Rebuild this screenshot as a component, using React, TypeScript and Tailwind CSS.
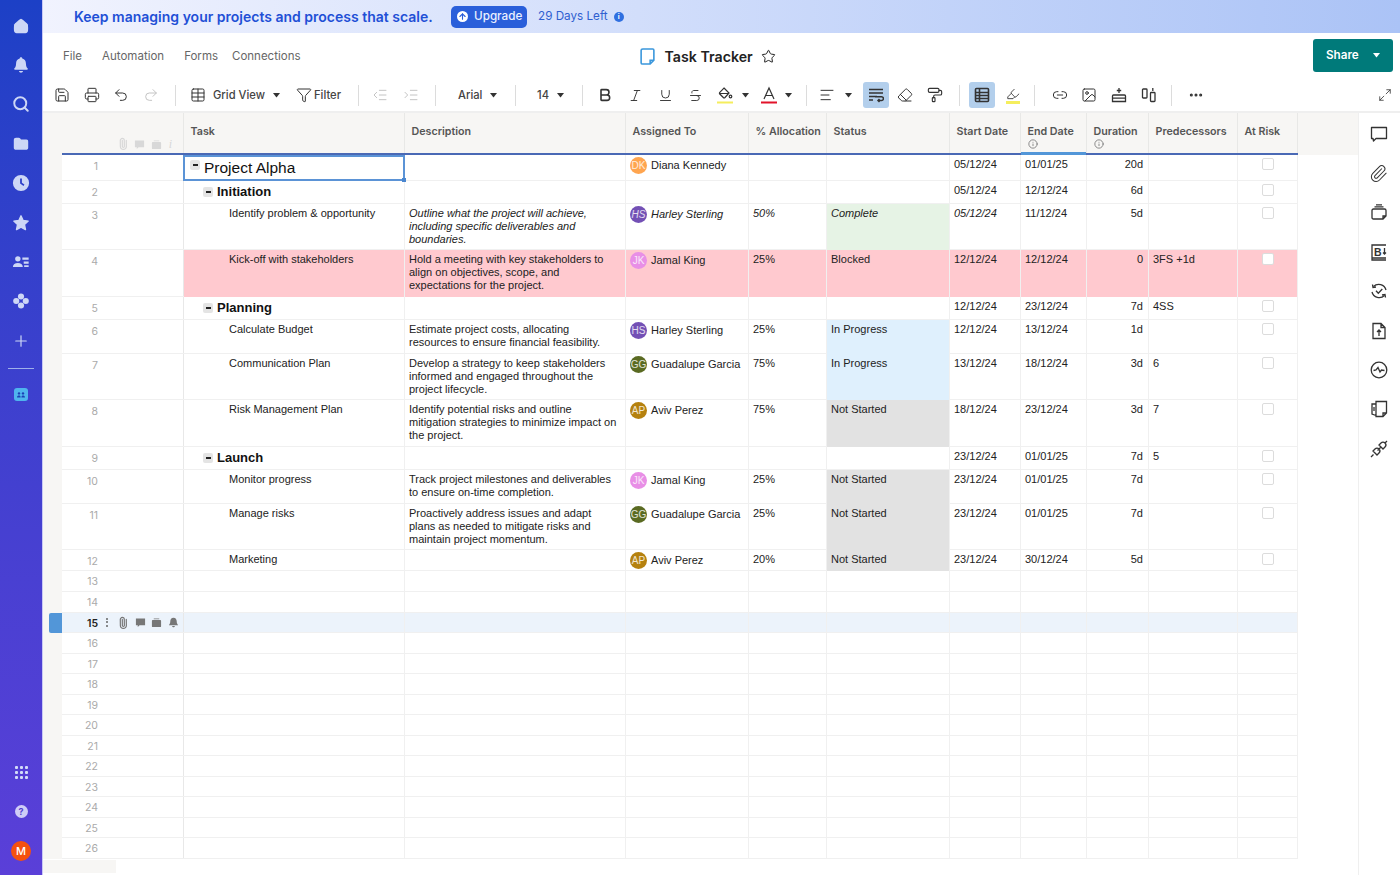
import React from 'react';
import {
  Save, Printer, Undo2, Redo2, Table, Funnel, IndentDecrease, IndentIncrease, Bold, Italic, Underline,
  Strikethrough, AlignLeft, Eraser, PaintRoller, Highlighter, Link2, Image, Ellipsis, Star, Search, Plus,
  Paperclip, Maximize2, ArrowUp, Info,
} from 'lucide-react';

const Caret = ({ className = 'text-[#333]' }: { className?: string }) => (
  <svg width="7" height="5" viewBox="0 0 7 5" className={className}>
    <path d="M0 0h7L3.5 4.5z" fill="currentColor" />
  </svg>
);

const Sep = ({ className = '' }: { className?: string }) => <div className={`h-[21px] w-px bg-[#dcdcdc] ${className}`} />;

const Btn = ({ children, active }: { children: React.ReactNode; active?: boolean }) => (
  <div className={`flex h-[26px] w-[26px] shrink-0 items-center justify-center rounded-[3px] ${active ? 'bg-[#b3cfec]' : ''}`}>{children}</div>
);

/* left rail icons */
const rail = 'h-[18px] w-[18px] text-[#cdd7f6]';
const railIcons = [
  <svg key="home" viewBox="0 0 20 20" className={rail} fill="currentColor"><path d="M10 2c1 0 7 5 7.6 6.4.3 1 .4 5 .2 7C17.600 17 16.500 18 15 18H5c-1.500 0-2.600-1-2.800-2.600-.2-2 -.1-6 .2-7C3 7 9 2 10 2z" /></svg>,
  <svg key="bell" viewBox="0 0 20 20" className={rail} fill="currentColor"><path d="M10 1.500c.8 0 1.400.6 1.400 1.300 2.700.6 4.100 2.900 4.100 5.700 0 3.500 1.500 4.700 2 5.500.3.600 0 1.300-.8 1.300H3.300c-.8 0-1.100-.7-.8-1.300.5-.8 2-2 2-5.500 0-2.800 1.400-5.100 4.100-5.700 0-.7.600-1.300 1.400-1.300zM7.700 16.800h4.600C12 18 11.100 18.700 10 18.700S8 18 7.700 16.800z" /></svg>,
  <Search key="search" className={rail} strokeWidth={2.6} />,
  <svg key="folder" viewBox="0 0 20 20" className={rail} fill="currentColor"><path d="M2 5.500C2 4 3 3 4.500 3h3c.8 0 1.200.3 1.700.9l.8 1.100h6c1.500 0 2 1 2 2.400v6.700c0 1.500-1 2.400-2.500 2.400h-11C3 16.500 2 15.600 2 14.100z" /></svg>,
  <svg key="clock" viewBox="0 0 20 20" className={rail} fill="currentColor"><path fillRule="evenodd" d="M10 1a9 9 0 1 1 0 18 9 9 0 0 1 0-18zM9 5v5.600l3.800 2.600 1-1.400L11 9.800V5z" /></svg>,
  <svg key="star" viewBox="0 0 20 20" className={rail} fill="currentColor" stroke="currentColor" strokeLinejoin="round" strokeWidth="1.500"><path d="M10 2l2.400 5.200 5.600.7-4.100 3.900 1.100 5.600-5-2.800-5 2.800 1.100-5.600L2 7.900l5.600-.7z" /></svg>,
  <svg key="team" viewBox="0 0 20 20" className={rail} fill="currentColor"><circle cx="6.500" cy="6.500" r="3" /><path d="M1 15.500c0-3 2.400-4.500 5.500-4.500s5.500 1.500 5.500 4.500zM11.500 5h7v2.500h-7zM13 9.500h5.500V12H13zM13.500 13.500h5v2h-5z" /></svg>,
  <svg key="apps" viewBox="0 0 20 20" className={rail} fill="currentColor"><circle cx="10" cy="5" r="3.400" /><circle cx="10" cy="15" r="3.400" /><circle cx="4.700" cy="10" r="3.400" /><circle cx="15.300" cy="10" r="3.400" /></svg>,
  <Plus key="plus" className={rail} strokeWidth={1.6} />,
];

/* right panel icons */
const side = 'h-[20px] w-[20px] text-[#333]';
const sideIcons = [
  <svg key="comment" viewBox="0 0 20 20" className={side} fill="none" stroke="currentColor" strokeWidth="1.300"><path d="M2.500 3.500h15v11H7l-2.500 2.500-.5-2.500H2.500z" strokeLinejoin="round" /></svg>,
  <Paperclip key="clip" className="h-[19px] w-[19px] text-[#333]" strokeWidth={1.300} />,
  <svg key="briefcase" viewBox="0 0 20 20" className={side} fill="none" stroke="currentColor" strokeWidth="1.300"><path d="M3 8.500c0-1 .5-1.500 1.500-1.500h11c1 0 1.500.5 1.500 1.500V14l-3 3H4.500C3.500 17 3 16.500 3 15.500zM14 17v-3h3M5.500 4.800h9M7 2.800h6" /></svg>,
  <svg key="brief" viewBox="0 0 20 20" className={side} fill="none" stroke="currentColor" strokeWidth="1.300"><path d="M17 3H3v15h14M3 16h14" /><text x="5" y="13.500" fontFamily="Liberation Sans, sans-serif" fontSize="10.500" fontWeight="700" fill="currentColor" stroke="none">B</text><path d="M15.500 6v6M14 10.500l1.500 1.500 1.500-1.500" /></svg>,
  <svg key="sync" viewBox="0 0 20 20" className={side} fill="none" stroke="currentColor" strokeWidth="1.300"><path d="M4.500 5.500A7.500 7.500 0 0 1 17 9M15.500 14.500A7.500 7.500 0 0 1 3 11M7 9.800l2.300 2.500 4-4.300" /><path d="M3.500 3.500l.5 3 3-.5M16.500 16.500l-.5-3-3 .5" /></svg>,
  <svg key="upload" viewBox="0 0 20 20" className={side} fill="none" stroke="currentColor" strokeWidth="1.300"><path d="M4 2.500h8l4 4v11H4zM12 2.500v4h4M10 15v-6M8 11l2-2 2 2" /></svg>,
  <svg key="activity" viewBox="0 0 20 20" className={side} fill="none" stroke="currentColor" strokeWidth="1.300"><circle cx="10" cy="10" r="7.800" /><path d="M4.500 10.500l2.500-.5 2-2.500 2 4.500 1.500-2 3 .5" /></svg>,
  <svg key="docs" viewBox="0 0 20 20" className={side} fill="none" stroke="currentColor" strokeWidth="1.300"><path d="M7 2.500h10.500v11.500l-3.500 3.500H7zM14 17.500V14h3.500M7 5H3v10l4 1.500M5 8v4" /></svg>,
  <svg key="plug" viewBox="0 0 20 20" className={side} fill="none" stroke="currentColor" strokeWidth="1.300"><path d="M2 18l2.500-2.500M18 2l-2.500 2.500M4 12l4 4 2-2a2.800 2.800 0 0 0-4-4zM10 6l4 4 2-2a2.800 2.800 0 0 0-4-4zM8.500 11.500l3-3" /></svg>,
];

type RowData = {
  h: string;
  n: number;
  level?: 0 | 1 | 2;
  task?: string;
  desc?: string[];
  who?: string;
  alloc?: string;
  status?: string;
  start?: string;
  end?: string;
  dur?: string;
  pred?: string;
  italic?: boolean;
  risk?: boolean;
  check?: boolean;
};

const rows: RowData[] = [
  { h: 'h-[26px]', n: 1, level: 0, task: 'Project Alpha', who: 'Diana Kennedy', start: '05/12/24', end: '01/01/25', dur: '20d', check: true },
  { h: 'h-[23px]', n: 2, level: 1, task: 'Initiation', start: '05/12/24', end: '12/12/24', dur: '6d', check: true },
  { h: 'h-[46px]', n: 3, level: 2, task: 'Identify problem & opportunity', desc: ['Outline what the project will achieve,', 'including specific deliverables and', 'boundaries.'], who: 'Harley Sterling', alloc: '50%', status: 'Complete', start: '05/12/24', end: '11/12/24', dur: '5d', italic: true, check: true },
  { h: 'h-[47px]', n: 4, level: 2, task: 'Kick-off with stakeholders', desc: ['Hold a meeting with key stakeholders to', 'align on objectives, scope, and', 'expectations for the project.'], who: 'Jamal King', alloc: '25%', status: 'Blocked', start: '12/12/24', end: '12/12/24', dur: '0', pred: '3FS +1d', risk: true, check: true },
  { h: 'h-[23px]', n: 5, level: 1, task: 'Planning', start: '12/12/24', end: '23/12/24', dur: '7d', pred: '4SS', check: true },
  { h: 'h-[34px]', n: 6, level: 2, task: 'Calculate Budget', desc: ['Estimate project costs, allocating', 'resources to ensure financial feasibility.'], who: 'Harley Sterling', alloc: '25%', status: 'In Progress', start: '12/12/24', end: '13/12/24', dur: '1d', check: true },
  { h: 'h-[46px]', n: 7, level: 2, task: 'Communication Plan', desc: ['Develop a strategy to keep stakeholders', 'informed and engaged throughout the', 'project lifecycle.'], who: 'Guadalupe Garcia', alloc: '75%', status: 'In Progress', start: '13/12/24', end: '18/12/24', dur: '3d', pred: '6', check: true },
  { h: 'h-[47px]', n: 8, level: 2, task: 'Risk Management Plan', desc: ['Identify potential risks and outline', 'mitigation strategies to minimize impact on', 'the project.'], who: 'Aviv Perez', alloc: '75%', status: 'Not Started', start: '18/12/24', end: '23/12/24', dur: '3d', pred: '7', check: true },
  { h: 'h-[23px]', n: 9, level: 1, task: 'Launch', start: '23/12/24', end: '01/01/25', dur: '7d', pred: '5', check: true },
  { h: 'h-[34px]', n: 10, level: 2, task: 'Monitor progress', desc: ['Track project milestones and deliverables', 'to ensure on-time completion.'], who: 'Jamal King', alloc: '25%', status: 'Not Started', start: '23/12/24', end: '01/01/25', dur: '7d', check: true },
  { h: 'h-[46px]', n: 11, level: 2, task: 'Manage risks', desc: ['Proactively address issues and adapt', 'plans as needed to mitigate risks and', 'maintain project momentum.'], who: 'Guadalupe Garcia', alloc: '25%', status: 'Not Started', start: '23/12/24', end: '01/01/25', dur: '7d', check: true },
  { h: 'h-[21px]', n: 12, level: 2, task: 'Marketing', who: 'Aviv Perez', alloc: '20%', status: 'Not Started', start: '23/12/24', end: '30/12/24', dur: '5d', check: true },
  ...[13, 14, 15, 16, 17, 18, 19, 20, 21, 22, 23, 24, 25, 26].map(n => ({ h: n === 13 ? 'h-[21px]' : 'h-[20.500px]', n })),
];

const people: Record<string, { initials: string; color: string }> = {
  'Diana Kennedy': { initials: 'DK', color: 'bg-[#ffa54f]' },
  'Harley Sterling': { initials: 'HS', color: 'bg-[#7350b5]' },
  'Jamal King': { initials: 'JK', color: 'bg-[#e88fe6]' },
  'Guadalupe Garcia': { initials: 'GG', color: 'bg-[#5a6a22]' },
  'Aviv Perez': { initials: 'AP', color: 'bg-[#b5810f]' },
};

const statusColor: Record<string, string> = {
  Complete: 'bg-[#e6f3e5] -mb-px',
  'In Progress': 'bg-[#dff0fd] -mb-px',
  'Not Started': 'bg-[#e2e2e2] -mb-px',
  Blocked: '',
};

const Minus = () => (
  <div className="flex h-[10px] w-[10px] shrink-0 items-center justify-center rounded-[2px] bg-[#e4e4e4]">
    <div className="h-[1.500px] w-[5px] bg-[#222]" />
  </div>
);

const RowIcons = ({ dark }: { dark?: boolean }) => {
  const c = dark ? 'text-[#777]' : 'text-[#d8d8d8]';
  return (
    <div className={`flex items-center ${c}`}>
      <Paperclip className="h-[12px] w-[12px] -rotate-45" strokeWidth={2.400} />
      <svg viewBox="0 0 12 12" className="ml-[5.500px] h-[11px] w-[11px]" fill="currentColor"><path d="M1 1.500h10v7.500H5l-2 2V9H1z" /></svg>
      <svg viewBox="0 0 12 12" className="ml-[5.500px] h-[11px] w-[11px]" fill="currentColor"><path d="M1 4.500c0-.8.5-1.200 1.200-1.200h7.600c.7 0 1.200.4 1.200 1.200V10c0 .6-.5 1-1.200 1H2.200C1.500 11 1 10.600 1 10zM3 1.500h6v1H3z" /></svg>
      {dark ? (
        <svg viewBox="0 0 12 12" className="ml-[5.500px] h-[11px] w-[11px]" fill="currentColor"><path d="M6 .7c2.300 0 3.500 1.800 3.500 4 0 2.600 1 3 1.500 4.300H1c.5-1.300 1.500-1.700 1.500-4.300 0-2.200 1.200-4 3.500-4zM4.500 9.800h3C7.300 11 6.700 11.300 6 11.300S4.700 11 4.500 9.800z" /></svg>
      ) : (
        <span className="ml-[7px] font-['Liberation_Serif',serif] text-[12px] italic leading-none">i</span>
      )}
    </div>
  );
};

const cols = ['w-[221px]', 'w-[221px]', 'w-[123px]', 'w-[78px]', 'w-[123px]', 'w-[71px]', 'w-[66px]', 'w-[62px]', 'w-[89px]', 'w-[60px]'];

const Cell = ({ w, className = '', children }: { w: string; className?: string; children?: React.ReactNode }) => (
  <div className={`${w} shrink-0 border-r border-[#f0f0f0] ${className}`}>{children}</div>
);

const GridRow = ({ r }: { r: RowData }) => {
  const selected = r.n === 15;
  const person = r.who ? people[r.who] : null;
  const tint = r.risk ? 'bg-[#ffc9cf] -mb-px' : '';
  const it = r.italic ? 'italic' : '';
  return (
    <div className={`flex ${r.h} font-['Liberation_Sans',sans-serif] text-[11px] leading-[13px] text-[#222]`}>
      <div className="w-[19px] shrink-0 bg-[#f7f6f4]">
        {selected && <div className="ml-[6px] h-full w-[13px] rounded-l-[2px] bg-[#5296d8]" />}
      </div>
      <div className={`flex w-[1236px] shrink-0 border-b border-[#f0f0f0] ${selected ? 'bg-[#ecf3fb]' : ''}`}>
        <div className={`flex w-[122px] shrink-0 items-start border-r border-[#e8e8e8] ${r.n > 12 ? 'pt-[4px]' : 'pt-[5px]'}`}>
          <div className={`ml-[19px] w-[17px] text-right font-['Inter',sans-serif] text-[10.500px] ${selected ? 'font-semibold text-[#222]' : 'text-[#aaaaaa]'}`}>{r.n}</div>
          {selected && (
            <>
              <div className="ml-[8px] mr-[9px] flex flex-col gap-[1.500px] pt-[1px]">
                <div className="h-[2px] w-[2px] rounded-full bg-[#666]" />
                <div className="h-[2px] w-[2px] rounded-full bg-[#666]" />
                <div className="h-[2px] w-[2px] rounded-full bg-[#666]" />
              </div>
              <RowIcons dark />
            </>
          )}
        </div>
        <Cell w={cols[0]} className={tint}>
          {r.level === 0 && (
            <div className="relative -mx-[1px] flex h-[26px] items-start gap-[4px] pl-[7px] pt-[4px] text-[15.500px] leading-[18px] text-[#111] outline outline-2 -outline-offset-2 outline-[#5b93d6]">
              <div className="mt-[1px]"><Minus /></div>
              {r.task}
              <div className="absolute -bottom-[1px] -right-[1px] h-[4px] w-[4px] bg-[#4a86cf]" />
            </div>
          )}
          {r.level === 1 && (
            <div className="flex items-start gap-[4px] pl-[19px] pt-[3px] text-[13px] font-bold leading-[15px] text-[#111]">
              <div className="mt-[3px]"><Minus /></div>
              {r.task}
            </div>
          )}
          {r.level === 2 && <div className="pl-[45px] pt-[3px]">{r.task}</div>}
        </Cell>
        <Cell w={cols[1]} className={`${tint} pl-[4px] pt-[3px] ${it}`}>
          {r.desc?.map(line => <div key={line} className="whitespace-nowrap">{line}</div>)}
        </Cell>
        <Cell w={cols[2]} className={`${tint} ${it}`}>
          {person && (
            <div className="flex items-center gap-[4px] pl-[4px] pt-[2px]">
              <div className={`flex h-[17px] w-[17px] items-center justify-center rounded-full text-[10px] leading-none text-white/80 ${person.color}`}>{person.initials}</div>
              <span className="whitespace-nowrap">{r.who}</span>
            </div>
          )}
        </Cell>
        <Cell w={cols[3]} className={`${tint} pl-[4px] pt-[3px] ${it}`}>{r.alloc}</Cell>
        <Cell w={cols[4]} className={`${r.status && !r.risk ? statusColor[r.status] : tint} pl-[4px] pt-[3px] ${it}`}>{r.status}</Cell>
        <Cell w={cols[5]} className={`${tint} pl-[4px] pt-[3px] ${it}`}>{r.start}</Cell>
        <Cell w={cols[6]} className={`${tint} pl-[4px] pt-[3px]`}>{r.end}</Cell>
        <Cell w={cols[7]} className={`${tint} pr-[5px] pt-[3px] text-right`}>{r.dur}</Cell>
        <Cell w={cols[8]} className={`${tint} pl-[4px] pt-[3px]`}>{r.pred}</Cell>
        <Cell w={cols[9]} className={`${tint} pl-[24px] pt-[3px]`}>
          {r.check && <div className={`h-[12px] w-[12px] rounded-[2px] border border-[#dcdcdc] ${r.risk ? 'bg-white' : ''}`} />}
        </Cell>
      </div>
    </div>
  );
};

const Head = ({ w, label, info, active }: { w: string; label: string; info?: boolean; active?: boolean }) => (
  <div className={`${w} relative shrink-0 border-r border-[#e8e8e6] pl-[6.500px] pt-[12px] text-[10.700px] font-semibold leading-[14px] text-[#555]`}>
    {label}
    {info && <Info className="h-[10px] w-[10px] text-[#777]" />}
    {active && <div className="absolute -bottom-[2px] left-0 right-0 h-[3px] bg-[#5296d8]" />}
  </div>
);

const Label = ({ className, children }: { className: string; children: React.ReactNode }) => (
  <span className={`whitespace-nowrap text-[11.200px] font-medium text-[#444] ${className}`}>{children}</span>
);

export default function App() {
  return (
    <div className="flex h-[875px] w-[1400px] overflow-hidden bg-white font-['Inter',sans-serif]">
      {/* Rail */}
      <aside className="flex w-[43px] shrink-0 flex-col items-center justify-between border-r border-[#c9c9f5] bg-gradient-to-b from-[#1c40c6] to-[#5a3fd8] pt-[6px] pb-[4px]">
        <div className="flex flex-col items-center">
          {railIcons.map(icon => <div key={icon.key} className="flex h-[39.400px] items-center justify-center">{icon}</div>)}
          <div className="mt-[7px] h-[1.500px] w-[26px] bg-[#9fb0ea]" />
          <div className="mt-[19px] flex h-[13px] w-[14px] items-center justify-center rounded-[3px] bg-[#4fb4ee]">
            <svg viewBox="0 0 12 10" className="h-[8px] w-[10px] text-[#1c40b6]" fill="currentColor"><circle cx="3.500" cy="3" r="1.500" /><circle cx="8.500" cy="3" r="1.500" /><path d="M1 8c0-1.500 1-2.300 2.500-2.300S5.500 6.500 5.500 8zM6.500 8c0-1.500 1-2.300 2-2.300S11 6.500 11 8z" /></svg>
          </div>
        </div>
        <div className="flex flex-col items-center">
          <div className="flex h-[39.400px] items-center justify-center">
            <div className="grid grid-cols-3 gap-[2px]">
              {[0, 1, 2, 3, 4, 5, 6, 7, 8].map(i => <div key={i} className="h-[3px] w-[3px] rounded-[1px] bg-[#d3dcf8]" />)}
            </div>
          </div>
          <div className="flex h-[39.400px] items-center justify-center">
            <div className="flex h-[13px] w-[13px] items-center justify-center rounded-full bg-[#cfcdf7] text-[9px] font-bold text-[#5540cf]">?</div>
          </div>
          <div className="flex h-[39.400px] items-center justify-center">
            <div className="flex h-[20px] w-[20px] items-center justify-center rounded-full bg-[#f4510f] text-[11px] font-medium text-white">M</div>
          </div>
        </div>
      </aside>

      <div className="flex min-w-0 flex-1 flex-col">
        {/* Banner */}
        <div className="flex h-[33px] shrink-0 items-center bg-gradient-to-r from-[#f1f3fe] to-[#abc3f6] pl-[31px]">
          <span className="w-[377px] whitespace-nowrap text-[14px] font-semibold text-[#1f50d6]">Keep managing your projects and process that scale.</span>
          <div className="flex h-[22px] w-[76px] items-center gap-[6px] rounded-[5px] bg-[#2a5fda] pl-[6px] text-[11.700px] font-medium leading-none text-[#eaf0ff]">
            <div className="flex h-[11px] w-[11px] items-center justify-center rounded-full bg-white">
              <ArrowUp className="h-[9px] w-[9px] text-[#2a5fda]" strokeWidth={3} />
            </div>
            Upgrade
          </div>
          <span className="ml-[11px] text-[11.700px] text-[#2f5fd0]">29 Days Left</span>
          <div className="ml-[6px] flex h-[10px] w-[10px] items-center justify-center rounded-full bg-[#2f6fe0] text-[7px] font-bold leading-none text-white">i</div>
        </div>

        {/* Menu */}
        <div className="flex h-[46px] shrink-0 items-center pt-[1px] text-[11.500px] text-[#666]">
          <span className="ml-[20px]">File</span>
          <span className="ml-[20px]">Automation</span>
          <span className="ml-[20px]">Forms</span>
          <span className="ml-[14px]">Connections</span>
          <div className="ml-[339px] flex items-center">
            <svg viewBox="0 0 14 16" className="h-[17px] w-[15px] text-[#3a97dc]" fill="none" stroke="currentColor" strokeWidth="1.500"><path d="M2.500 1h9.500c.6 0 1 .4 1 1v9.500L9.500 15h-7c-.6 0-1.500-.4-1.500-1V2c0-.6.900-1 1.500-1zM13 11.500H9.500V15" /></svg>
            <span className="ml-[10px] text-[14.200px] font-semibold text-[#222]">Task Tracker</span>
            <Star className="ml-[8px] h-[15px] w-[15px] text-[#222]" strokeWidth={1.600} />
          </div>
          <div className="ml-auto mr-[7px] -mt-[2px] flex h-[33px] w-[80px] items-center rounded-[3px] bg-[#007a7a] pl-[13px] text-[11.700px] font-semibold text-white">
            Share
            <Caret className="ml-[14px] text-white" />
          </div>
        </div>

        {/* Toolbar */}
        <div className="flex h-[34px] shrink-0 items-center border-b-2 border-[#efefef] pl-[6px] text-[#333]">
          <Btn><Save className="h-[16px] w-[16px]" strokeWidth={1.500} /></Btn>
          <div className="ml-[4px]"><Btn><Printer className="h-[16px] w-[16px]" strokeWidth={1.500} /></Btn></div>
          <div className="ml-[3px]"><Btn><Undo2 className="h-[16px] w-[16px]" strokeWidth={1.500} /></Btn></div>
          <div className="ml-[4px]"><Btn><Redo2 className="h-[16px] w-[16px] text-[#c4c4c4]" strokeWidth={1.500} /></Btn></div>
          <Sep className="ml-[11px]" />
          <div className="ml-[9px]"><Btn><Table className="h-[16px] w-[16px]" strokeWidth={1.500} /></Btn></div>
          <Label className="ml-[2px] w-[51px]">Grid View</Label>
          <Caret className="ml-[9px]" />
          <Funnel className="ml-[16px] h-[16px] w-[16px]" strokeWidth={1.500} />
          <Label className="w-[33px] pl-[2px]">Filter</Label>
          <Sep className="ml-[13px]" />
          <div className="ml-[8px]"><Btn><IndentDecrease className="h-[16px] w-[16px] text-[#c4c4c4]" strokeWidth={1.500} /></Btn></div>
          <div className="ml-[5px]"><Btn><IndentIncrease className="h-[16px] w-[16px] text-[#c4c4c4]" strokeWidth={1.500} /></Btn></div>
          <Sep className="ml-[11px]" />
          <Label className="ml-[22px] w-[24px]">Arial</Label>
          <Caret className="ml-[8px]" />
          <Sep className="ml-[18px]" />
          <Label className="ml-[21px] w-[14px]">14</Label>
          <Caret className="ml-[6px]" />
          <Sep className="ml-[18px]" />
          <div className="ml-[9px]"><Btn><Bold className="h-[16px] w-[16px]" strokeWidth={2.400} /></Btn></div>
          <div className="ml-[4px]"><Btn><Italic className="h-[15px] w-[15px]" strokeWidth={1.500} /></Btn></div>
          <div className="ml-[4px]"><Btn><Underline className="h-[15px] w-[15px]" strokeWidth={1.500} /></Btn></div>
          <div className="ml-[4px]"><Btn><Strikethrough className="h-[15px] w-[15px]" strokeWidth={1.500} /></Btn></div>
          <div className="ml-[4px]">
            <Btn>
              <svg viewBox="0 0 16 18" className="h-[18px] w-[16px]" fill="none" stroke="currentColor" strokeWidth="1.200">
                <path d="M7 2l5 5-4 4.500a1.200 1.200 0 0 1-1.700 0L2.800 8a1.200 1.200 0 0 1 0-1.700zM3 7.500h9" />
                <circle cx="13.500" cy="10.500" r="1.300" />
                <rect x="0" y="15.500" width="16" height="2" fill="#f5ee5d" stroke="none" />
              </svg>
            </Btn>
          </div>
          <Caret className="ml-[4px]" />
          <div className="ml-[7px]">
            <Btn>
              <svg viewBox="0 0 16 18" className="h-[18px] w-[16px]" fill="none" stroke="currentColor" strokeWidth="1.200">
                <path d="M3 13L8 2l5 11M5 9.500h6" />
                <rect x="0" y="15.500" width="16" height="2" fill="#e2132a" stroke="none" />
              </svg>
            </Btn>
          </div>
          <Caret className="ml-[3px]" />
          <Sep className="ml-[14px]" />
          <div className="ml-[7px]"><Btn><AlignLeft className="h-[16px] w-[16px]" strokeWidth={1.500} /></Btn></div>
          <Caret className="ml-[5px]" />
          <div className="ml-[11px]">
            <Btn active>
              <svg viewBox="0 0 16 16" className="h-[16px] w-[16px]" fill="none" stroke="currentColor" strokeWidth="1.500"><path d="M1 2.500h14M1 6h14M1 9.500h8M1 13h4M11 13.500h2.500a1.800 1.800 0 0 0 0-3.800H7M11.500 12l-1.500 1.500 1.500 1.500" /></svg>
            </Btn>
          </div>
          <div className="ml-[3px]"><Btn><Eraser className="h-[16px] w-[16px]" strokeWidth={1.500} /></Btn></div>
          <div className="ml-[4px]"><Btn><PaintRoller className="h-[16px] w-[16px]" strokeWidth={1.700} /></Btn></div>
          <Sep className="ml-[11px]" />
          <div className="ml-[9px]">
            <Btn active>
              <svg viewBox="0 0 16 16" className="h-[16px] w-[16px]" fill="none" stroke="currentColor" strokeWidth="1.600"><rect x="1.500" y="1.500" width="13" height="13" rx="1" /><path d="M1.500 5.500h13M1.500 8.500h13M1.500 11.500h13M5.500 1.500v13" /></svg>
            </Btn>
          </div>
          <div className="ml-[5px]">
            <Btn>
              <div className="flex flex-col items-center">
                <Highlighter className="h-[14px] w-[14px]" strokeWidth={1.500} />
                <div className="h-[3px] w-[14px] bg-[#f5ee5d]" />
              </div>
            </Btn>
          </div>
          <Sep className="ml-[8px]" />
          <div className="ml-[12px]"><Btn><Link2 className="h-[16px] w-[16px]" strokeWidth={1.500} /></Btn></div>
          <div className="ml-[3px]"><Btn><Image className="h-[16px] w-[16px]" strokeWidth={1.500} /></Btn></div>
          <div className="ml-[4px]">
            <Btn>
              <svg viewBox="0 0 16 16" className="h-[16px] w-[16px]" fill="none" stroke="currentColor" strokeWidth="1.300"><path d="M8 1v5M5.800 3.500h4.400M2.500 8h11c.6 0 1 .4 1 1v5.500h-13V9c0-.6.400-1 1-1zM1.500 11.200h13" /></svg>
            </Btn>
          </div>
          <div className="ml-[4px]">
            <Btn>
              <svg viewBox="0 0 16 16" className="h-[16px] w-[16px]" fill="none" stroke="currentColor" strokeWidth="1.300"><rect x="1.500" y="2" width="4.500" height="9" rx=".8" /><rect x="9.500" y="5.500" width="4.500" height="9" rx=".8" /><path d="M11.800 1v3" /></svg>
            </Btn>
          </div>
          <Sep className="ml-[9px]" />
          <div className="ml-[11px]"><Btn><Ellipsis className="h-[16px] w-[16px]" strokeWidth={2.600} /></Btn></div>
          <div className="ml-auto mr-[8px]"><Maximize2 className="h-[14px] w-[14px]" strokeWidth={1.400} /></div>
        </div>

        {/* Body */}
        <div className="flex min-h-0 flex-1">
          <div className="flex w-[1315px] shrink-0 flex-col">
            {/* Header */}
            <div className="flex h-[42px] shrink-0 bg-[#f7f6f4]">
              <div className="w-[19px] shrink-0" />
              <div className="flex w-[1236px] shrink-0 border-b-2 border-[#4a69b5]">
                <div className="flex w-[122px] shrink-0 items-end justify-end border-r border-[#e8e8e6] pb-[3px] pr-[11px]">
                  <RowIcons />
                </div>
                <Head w={cols[0]} label="Task" />
                <Head w={cols[1]} label="Description" />
                <Head w={cols[2]} label="Assigned To" />
                <Head w={cols[3]} label="% Allocation" />
                <Head w={cols[4]} label="Status" />
                <Head w={cols[5]} label="Start Date" />
                <Head w={cols[6]} label="End Date" info active />
                <Head w={cols[7]} label="Duration" info />
                <Head w={cols[8]} label="Predecessors" />
                <Head w={cols[9]} label="At Risk" />
              </div>
            </div>
            {/* Rows */}
            {rows.map(r => <GridRow key={r.n} r={r} />)}
            {/* Scrollbar strip */}
            <div className="mt-[1px] h-[13px] w-[73px] bg-[#f7f6f4]" />
          </div>
          {/* Right panel */}
          <div className="flex flex-1 flex-col items-center border-l border-[#efefef] pr-[2px] pt-[1px]">
            {sideIcons.map(icon => <div key={icon.key} className="flex h-[39.400px] items-center justify-center">{icon}</div>)}
          </div>
        </div>
      </div>
    </div>
  );
}
